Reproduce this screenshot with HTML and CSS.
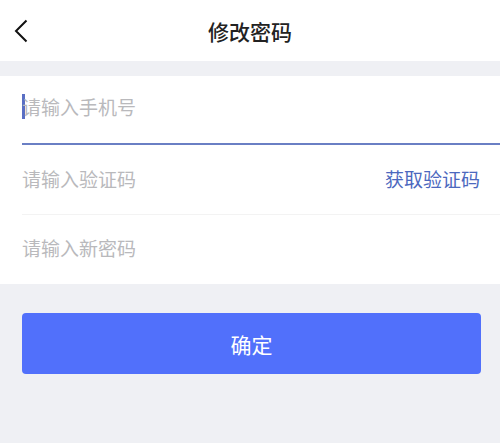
FILE: index.html
```html
<!DOCTYPE html>
<html lang="zh">
<head>
<meta charset="utf-8">
<link rel="stylesheet" href="styles.css">
</head>
<body>
<div class="page">
  <header class="nav">
    <span class="back">
      <svg width="14" height="24" viewBox="0 0 14 24"><path d="M12.5 1.5 L2 12 L12.5 22.5" fill="none" stroke="#111" stroke-width="2"/></svg>
    </span>
    <h1 class="title">修改密码</h1>
  </header>
  <div class="gap"></div>
  <section class="form">
    <div class="row row-active">
      <span class="caret"></span>
      <span class="ph">请输入手机号</span>
    </div>
    <div class="row row-divided">
      <span class="ph">请输入验证码</span>
      <span class="code">获取验证码</span>
    </div>
    <div class="row row-last">
      <span class="ph">请输入新密码</span>
    </div>
  </section>
  <div class="actions">
    <button class="submit">确定</button>
  </div>
</div>
</body>
</html>
```
FILE: styles.css
```css
* { box-sizing: border-box; }
html, body { margin: 0; padding: 0; }
body {
  width: 500px;
  height: 443px;
  background: #eff0f4;
  font-family: "Noto Sans CJK SC", "Noto Sans", sans-serif;
  overflow: hidden;
}
.nav {
  height: 61px;
  background: #fff;
  display: flex;
  align-items: center;
  justify-content: center;
  position: relative;
}
.back {
  position: absolute;
  left: 14px;
  top: 19px;
  display: flex;
}
.title {
  margin: 0;
  font-size: 21px;
  font-weight: 500;
  color: #222;
}
.gap { height: 15px; }
.form {
  background: #fff;
  padding-left: 22px;
}
.row {
  display: flex;
  align-items: center;
  padding-right: 20px;
}
.row-active {
  border-bottom: 2px solid #6a7fc4;
  height: 69px;
  padding-bottom: 6px;
}
.row-divided {
  border-bottom: 1px solid #f3f3f3;
  height: 70px;
  padding-bottom: 3px;
}
.row-last {
  height: 69px;
  padding-bottom: 4px;
}
.caret {
  width: 3px;
  height: 25px;
  background: #5a6fc4;
  margin-right: -3px;
}
.ph {
  font-size: 19px;
  color: #b9b9bc;
  flex: 1;
}
.code {
  font-size: 19px;
  color: #4c68be;
}
.actions {
  padding: 29px 19px 0 22px;
}
.submit {
  width: 459px;
  height: 61px;
  border: none;
  border-radius: 4px;
  background: #5170fb;
  color: #fff;
  font-family: inherit;
  font-size: 21px;
  padding: 0;
}
```
